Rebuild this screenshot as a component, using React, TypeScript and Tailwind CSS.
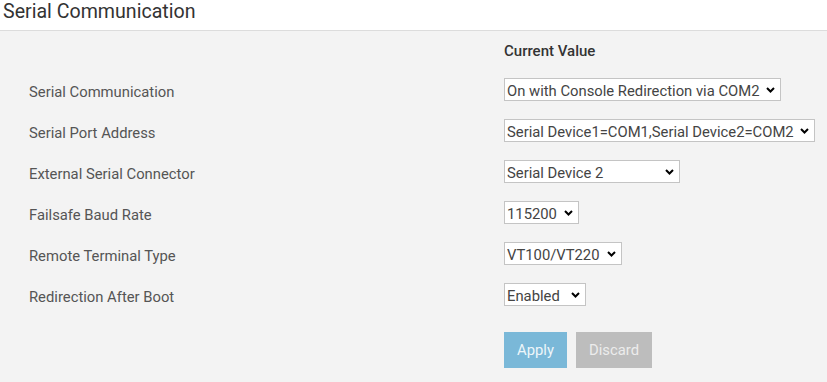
const rows = [
  { label: "Serial Communication", value: "On with Console Redirection via COM2", width: "w-[277px]" },
  { label: "Serial Port Address", value: "Serial Device1=COM1,Serial Device2=COM2", width: "w-[311px]" },
  { label: "External Serial Connector", value: "Serial Device 2", width: "w-[176px]" },
  { label: "Failsafe Baud Rate", value: "115200", width: "w-[75px]" },
  { label: "Remote Terminal Type", value: "VT100/VT220", width: "w-[118px]" },
  { label: "Redirection After Boot", value: "Enabled", width: "w-[82px]" },
]

function Chevron() {
  return (
    <svg
      className="absolute right-[5px] top-1/2 -translate-y-1/2 pointer-events-none"
      width="9"
      height="7"
      viewBox="0 0 9 7"
      fill="none"
    >
      <polyline points="1,1.5 4.5,5 8,1.5" stroke="#000" strokeWidth="2" />
    </svg>
  )
}

function Select({ value, width }: { value: string; width: string }) {
  return (
    <div className={`relative h-[23px] ${width} bg-white border border-[#c4c4c4]`}>
      <select
        defaultValue={value}
        className="appearance-none w-full h-full bg-transparent pl-[2px] pr-4 text-[14.8px] text-[#444] outline-none"
      >
        <option>{value}</option>
      </select>
      <Chevron />
    </div>
  )
}

export default function App() {
  return (
    <div className="w-[827px] h-[382px] bg-[#f3f3f3] overflow-hidden" style={{ fontFamily: "Roboto, 'Liberation Sans', sans-serif" }}>
      <div className="h-[31px] bg-white border-b border-[#dcdcdc] pl-[3px]">
        <h1 className="text-[19.6px] leading-[24px] text-[#333]">Serial Communication</h1>
      </div>

      <div className="grid grid-cols-[504px_1fr]">
        <div className="h-[38px]" />
        <div className="h-[38px] pt-[9px] text-[15px] font-medium text-[#333]">Current Value</div>

        {rows.map((row) => (
          <div key={row.label} className="contents">
            <div className="h-[41px] flex items-center pl-[29px] pt-[6px] text-[14.8px] text-[#555]">{row.label}</div>
            <div className="h-[41px] flex items-center">
              <Select value={row.value} width={row.width} />
            </div>
          </div>
        ))}

        <div />
        <div className="flex gap-[9px] pt-[17px]">
          <button className="w-[63px] h-[36px] bg-[#7ab8d8] text-[#eef6fa] text-[14.8px]">Apply</button>
          <button className="w-[76px] h-[36px] bg-[#bdbdbd] text-[#ececec] text-[14.8px]">Discard</button>
        </div>
      </div>
    </div>
  )
}
